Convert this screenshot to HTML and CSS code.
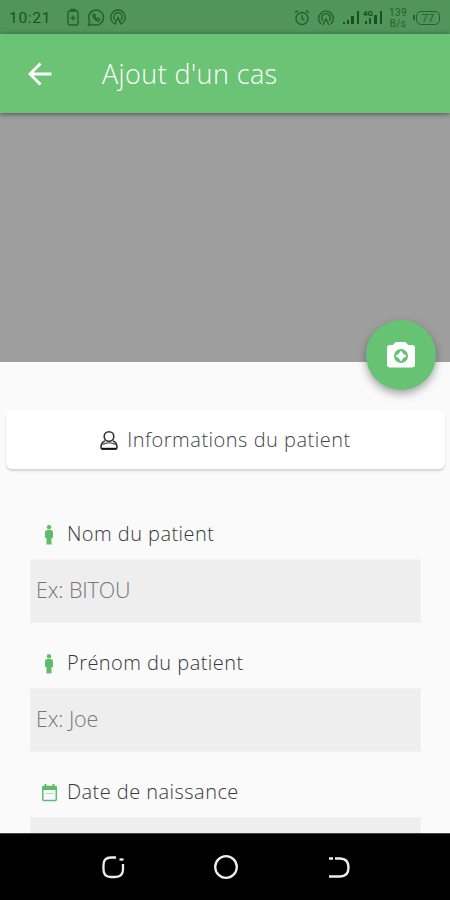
FILE: index.html
```
<!DOCTYPE html>
<html lang="fr">
<head>
<meta charset="utf-8">
<title>Ajout d'un cas</title>
<link rel="stylesheet" href="styles.css">
</head>
<body>
<div class="screen">
  <div class="status">
    <span class="clock">10:21</span>
    <svg class="status-left" width="64" height="20" viewBox="0 0 64 20" fill="none" stroke="currentColor" stroke-width="1.4">
      <path d="M6 3V1.500h4V3M4.500 3h7q1.500 0 1.500 1.500v11q0 1.500-1.500 1.500h-7Q3 17 3 15.500v-11Q3 3 4.500 3zM8 7.500v5M5.500 10h5" />
      <path d="M23.500 17.500l1.200-4A7.500 7.500 0 1 1 27.800 16.300zM28 6.500c-1 2 2.500 6.800 6 6.500l1-1.800-2.200-1.200-1.200 1.200-2-2 .8-1.400-.9-1.700z" />
      <path d="M50 16a7.300 7.300 0 1 1 6 0M50.500 12.500a4.300 4.300 0 1 1 5 0M50 16.500l3-7 3 7" />
    </svg>
    <svg class="status-right" width="104" height="20" viewBox="0 0 104 20" fill="none" stroke="currentColor" stroke-width="1.4">
      <circle cx="10" cy="10.500" r="6"/><path d="M10 7v4l2.500 1M3 5l3-2.500M17 5l-3-2.500"/>
      <path d="M29 16a7.400 7.400 0 1 1 10 0M31 13a4.300 4.300 0 1 1 6 0M31 17l3-6 3 6"/>
      <g class="bars" stroke="none" fill="currentColor">
        <path d="M51 14h2v2h-2zM55 12h2v4h-2zM59 8h3v8h-3zM65 3h2v13h-2zM73 13h2v3h-2zM77 10h2v6h-2zM82 7h3v9h-3zM88 3h2v13h-2z"/>
        <text class="network" x="71" y="8">4G</text>
      </g>
    </svg>
    <div class="rate"><span>139</span><span>B/s</span></div>
    <div class="battery"><span>77</span></div>
  </div>
  <header class="appbar">
    <svg class="back" width="24" height="24" viewBox="0 0 24 24" fill="none" stroke="currentColor" stroke-width="2.900"><path d="M23.500 12H2M12.500 1.500L2 12l10.500 10.500"/></svg>
    <h1>Ajout d'un cas</h1>
  </header>
  <div class="photo">
    <button class="fab" aria-label="Photo">
      <svg width="30" height="28" viewBox="0 0 30 28"><path fill="#fff" d="M9.500 1h10l2.700 3H26q3 0 3 3v16.500q0 3-3 3H4q-3 0-3-3V7q0-3 3-3h2.800z"/><circle cx="15" cy="15" r="7" fill="#67c374"/><path fill="#fff" d="M15 9.500l2.200 3.300 3.300 2.200-3.300 2.200L15 20.500l-2.200-3.300L9.500 15l3.300-2.200z"/></svg>
    </button>
  </div>
  <main>
    <section class="card">
      <svg width="20" height="22" viewBox="0 0 20 22" fill="none" stroke="#333" stroke-width="1.600"><circle cx="10" cy="7.500" r="4.800"/><path d="M6 12C3.200 12.900 2 15 2 18.500q0 1.200 1.200 1.200h13.600q1.200 0 1.200-1.200c0-3.500-1.200-5.600-4-6.500"/><path d="M3.500 15.500Q10 12 16.500 15.500" stroke-width="1.200"/><path d="M2.500 19.800h15" stroke="#111" stroke-width="2"/></svg>
      <h2>Informations du patient</h2>
    </section>
    <div class="field">
      <label for="nom"><svg width="18" height="22" viewBox="0 0 18 22" fill="currentColor"><circle cx="9" cy="3.300" r="2.200"/><path d="M7.500 6h3q2.500 0 2.500 2.500V14h-1.500v6.500h-5V14H5V8.500Q5 6 7.500 6z"/></svg><span>Nom du patient</span></label>
      <input id="nom" placeholder="Ex: BITOU">
    </div>
    <div class="field">
      <label for="prenom"><svg width="18" height="22" viewBox="0 0 18 22" fill="currentColor"><circle cx="9" cy="3.300" r="2.200"/><path d="M7.500 6h3q2.500 0 2.500 2.500V14h-1.500v6.500h-5V14H5V8.500Q5 6 7.500 6z"/></svg><span>Prénom du patient</span></label>
      <input id="prenom" placeholder="Ex: Joe">
    </div>
    <div class="field">
      <label for="date"><svg width="18" height="22" viewBox="0 0 18 22" fill="none" stroke="currentColor" stroke-width="1.500"><rect x="2.800" y="4.500" width="13.500" height="14" rx="1"/><path d="M2.500 6h14" stroke-width="4"/><path d="M5.500 2v4M13.500 2v4" stroke-width="2"/><path d="M5.500 11.500h8" stroke-width="1" opacity=".5"/></svg><span>Date de naissance</span></label>
      <input id="date">
    </div>
  </main>
  <nav>
    <svg width="24" height="24" viewBox="0 0 24 24" fill="none" stroke="#eee" stroke-width="2.300"><path d="M15 2.500H10Q2.500 2.500 2.500 10v4.500q0 7.500 7.500 7.500h4q8 0 8-7.500V9"/><path d="M18.500 4.500h4"/></svg>
    <svg width="26" height="26" viewBox="0 0 26 26" fill="none" stroke="#eee" stroke-width="2.300"><circle cx="13" cy="13" r="10.800"/></svg>
    <svg width="24" height="24" viewBox="0 0 24 24" fill="none" stroke="#eee" stroke-width="2.400"><path d="M2 3.500h4M8 3.500h5q8.500 0 8.500 9t-8.500 9H2"/></svg>
  </nav>
</div>
</body>
</html>
```
FILE: styles.css
```
* { box-sizing: border-box; }
body { margin: 0; font-family: "Open Sans", "Noto Sans", sans-serif; font-weight: 300; }
h1, h2 { margin: 0; font-weight: 300; white-space: nowrap; }
svg { flex: none; display: block; }
.screen { width: 450px; height: 900px; overflow: hidden; display: flex; flex-direction: column; background: #fafafa; }
.status { height: 34px; flex: none; display: flex; align-items: center; background: #52955a; color: #285e32; padding: 2px 0 0 9px; }
.clock { font: 400 15.500px Roboto, sans-serif; letter-spacing: .7px; width: 56px; color: #1e4f27; }
.status-right { margin-left: 163px; }
.bars { color: #1d4d25; }
.network { font: 700 8px Roboto, sans-serif; }
.rate { display: flex; flex-direction: column; align-items: center; width: 20px; margin-left: -8px; font: 400 10px/11px Roboto, sans-serif; letter-spacing: .4px; }
.battery { position: relative; margin-left: 8px; width: 24px; height: 14px; border: 1.500px solid; border-radius: 5px; display: flex; align-items: center; justify-content: center; font: 400 11px/11px Roboto, sans-serif; }
.battery::before { content: ""; position: absolute; left: -4px; top: 3px; width: 1.500px; height: 5px; background: currentColor; }
.appbar { height: 79px; flex: none; display: flex; align-items: center; background: #6bc375; color: #fff; padding-left: 28px; box-shadow: 0 1px 5px rgba(0,0,0,.5); z-index: 1; }
h1 { margin-left: 50px; font-size: 27px; letter-spacing: .4px; }
.photo { height: 249px; flex: none; position: relative; background: #9e9e9e; }
.fab { position: absolute; right: 14px; bottom: -28px; width: 70px; height: 70px; border: 0; padding: 0; border-radius: 50%; background: #67c374; display: flex; align-items: center; justify-content: center; box-shadow: 0 4px 8px rgba(0,0,0,.35); }
main { height: 471px; flex: none; overflow: hidden; padding: 48px 5px 0 6px; }
.card { height: 59px; display: flex; align-items: center; justify-content: center; gap: 8px; padding-right: 1px; background: #fff; border-radius: 6px; box-shadow: 0 2px 2px rgba(0,0,0,.15); color: #444; }
h2 { font-size: 20px; letter-spacing: .5px; }
.field { margin: 0 24px; height: 129px; }
.card + .field { margin-top: 48px; }
.field label { height: 42px; display: flex; align-items: center; padding: 0 0 9px 10px; gap: 9px; color: #5fbd69; }
.field label svg { margin-top: 3px; }
.field label span { font-size: 20px; color: #383838; letter-spacing: .45px; white-space: nowrap; }
.field input { display: block; width: 391px; height: 64px; border: 1px solid #f2f2f2; border-radius: 0; padding: 0 5px 3px; background: #eee; font: 300 21.500px "Open Sans", sans-serif; letter-spacing: -.1px; outline: 0; }
.field input::placeholder { color: #777; opacity: 1; }
nav { height: 67px; flex: none; background: #000; border-top: 1px solid #444; display: flex; justify-content: center; align-items: center; gap: 88px; padding-left: 1px; }
```
